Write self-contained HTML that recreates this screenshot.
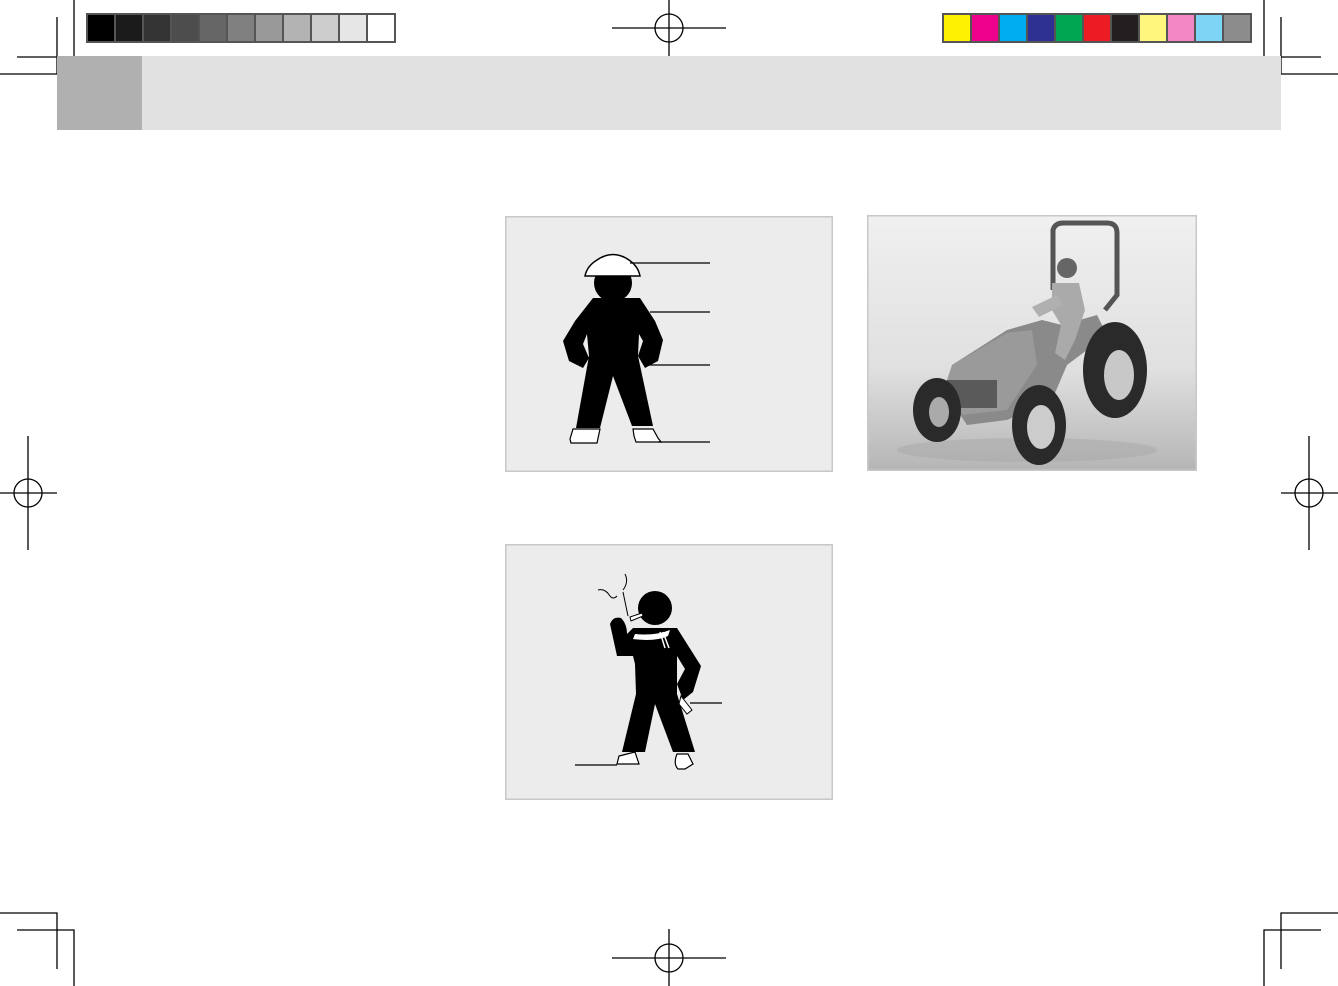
<!DOCTYPE html>
<html><head><meta charset="utf-8"><style>
body{margin:0;width:1338px;height:986px;background:#fff;position:relative;overflow:hidden;font-family:"Liberation Sans",sans-serif}
.a{position:absolute}
</style></head><body>
<svg class="a" style="left:0;top:0" width="1338" height="986">
<g stroke="#000" stroke-width="1.3" fill="none">
<path d="M74 0V57H17M57 17V74H0"/>
<path d="M1264 0V57H1321M1281 17V74H1338"/>
<path d="M0 913H57V969M17 930H74V986"/>
<path d="M1338 913H1281V969M1321 930H1264V986"/>
<path d="M612 28H726M669 0V57"/><circle cx="669" cy="28" r="14"/>
<path d="M612 958H726M669 929V986"/><circle cx="669" cy="958" r="14"/>
<path d="M0 493H57M28 436V550"/><circle cx="28" cy="493" r="14"/>
<path d="M1281 493H1338M1309 436V550"/><circle cx="1309" cy="493" r="14"/>
</g>
<rect x="86" y="13" width="310" height="30" fill="#555"/>
<g>
<rect x="88" y="15" width="26" height="26" fill="#000"/>
<rect x="116" y="15" width="26" height="26" fill="#1b1b1b"/>
<rect x="144" y="15" width="26" height="26" fill="#333"/>
<rect x="172" y="15" width="26" height="26" fill="#4d4d4d"/>
<rect x="200" y="15" width="26" height="26" fill="#666"/>
<rect x="228" y="15" width="26" height="26" fill="#808080"/>
<rect x="256" y="15" width="26" height="26" fill="#999"/>
<rect x="284" y="15" width="26" height="26" fill="#b3b3b3"/>
<rect x="312" y="15" width="26" height="26" fill="#ccc"/>
<rect x="340" y="15" width="26" height="26" fill="#e6e6e6"/>
<rect x="368" y="15" width="26" height="26" fill="#fff"/>
</g>
<rect x="942" y="13" width="310" height="30" fill="#555"/>
<g>
<rect x="944" y="15" width="26" height="26" fill="#fff200"/>
<rect x="972" y="15" width="26" height="26" fill="#ec008c"/>
<rect x="1000" y="15" width="26" height="26" fill="#00aeef"/>
<rect x="1028" y="15" width="26" height="26" fill="#2e3192"/>
<rect x="1056" y="15" width="26" height="26" fill="#00a651"/>
<rect x="1084" y="15" width="26" height="26" fill="#ed1c24"/>
<rect x="1112" y="15" width="26" height="26" fill="#231f20"/>
<rect x="1140" y="15" width="26" height="26" fill="#fff67d"/>
<rect x="1168" y="15" width="26" height="26" fill="#f387c4"/>
<rect x="1196" y="15" width="26" height="26" fill="#7dd4f5"/>
<rect x="1224" y="15" width="26" height="26" fill="#8c8c8c"/>
</g>
<rect x="57" y="56" width="1224" height="74" fill="#e1e1e1"/>
<rect x="57" y="56" width="85" height="74" fill="#b1b0b0"/>
</svg>

<svg class="a" style="left:505px;top:216px" width="328" height="256">
<rect x="0.5" y="0.5" width="327" height="255" fill="#ececec" stroke="#c8c8c8" stroke-width="2"/>
<g fill="#000">
<circle cx="108" cy="67" r="19"/>
<path d="M88 82H135L150 105L158 124L153 145L140 152L133 140L138 125L134 118L133 140L148 210H127L108 160L95 212H71L84 140L82 118L78 128L84 142L78 152L64 145L58 125L70 105Z"/>
</g>
<path d="M80 60Q82 50 92 44Q108 33 124 44Q133 50 135 60Z" fill="#fff" stroke="#000" stroke-width="1.5"/>
<path d="M68 213H90L95 213L92 227H66L65 223Z" fill="#fff" stroke="#000" stroke-width="1.2"/>
<path d="M128 213H148L153 222L156 226H131L129 220Z" fill="#fff" stroke="#000" stroke-width="1.2"/>
<g stroke="#000" stroke-width="1.2"><path d="M125 47H205M145 96H205M143 149H205M153 226H205"/></g>
</svg>

<svg class="a" style="left:867px;top:215px" width="330" height="256">
<defs><linearGradient id="g" x1="0" y1="0" x2="0" y2="1"><stop offset="0" stop-color="#f0f0f0"/><stop offset="0.6" stop-color="#e0e0e0"/><stop offset="1" stop-color="#b5b5b5"/></linearGradient></defs>
<rect x="0.5" y="0.5" width="329" height="255" fill="url(#g)" stroke="#c8c8c8" stroke-width="2"/>
<path d="M186 75V15Q188 8 196 8H240Q250 8 250 18V80L238 95" fill="none" stroke="#555" stroke-width="5"/>
<ellipse cx="160" cy="235" rx="130" ry="12" fill="#a8a8a8" opacity="0.5"/>
<path d="M80 180L85 150L140 115L175 105L195 110L230 100L240 120L200 150L185 185L140 205L100 210Z" fill="#8a8a8a"/>
<path d="M80 165L85 150L140 118L165 115L170 150L140 195L95 200Z" fill="#9a9a9a"/>
<rect x="80" y="165" width="50" height="28" fill="#5a5a5a"/>
<ellipse cx="70" cy="195" rx="24" ry="32" fill="#2a2a2a"/>
<ellipse cx="72" cy="197" rx="10" ry="15" fill="#aaa"/>
<ellipse cx="172" cy="210" rx="27" ry="40" fill="#2a2a2a"/>
<ellipse cx="174" cy="212" rx="14" ry="22" fill="#ccc"/>
<ellipse cx="248" cy="155" rx="32" ry="48" fill="#2a2a2a"/>
<ellipse cx="252" cy="160" rx="15" ry="25" fill="#c8c8c8"/>
<circle cx="200" cy="53" r="10" fill="#666"/>
<path d="M185 68H212L218 95L208 125L198 145L188 138L194 110L185 95Z" fill="#aaa"/>
<path d="M165 92L190 80L196 90L172 102Z" fill="#b0b0b0"/>
</svg>

<svg class="a" style="left:505px;top:544px" width="328" height="256">
<rect x="0.5" y="0.5" width="327" height="255" fill="#ececec" stroke="#c8c8c8" stroke-width="2"/>
<g fill="#000">
<circle cx="150" cy="64" r="17"/>
<path d="M105 80Q108 72 116 74Q122 80 122 90L128 84H172L196 122L188 148L178 156L172 140L180 125L172 112L172 150L190 208H168L150 160L140 208H117L131 150L130 120L128 112H112Z"/>
</g>
<path d="M130 90Q150 92 165 86L163 92Q150 98 128 95Z" fill="#fff"/>
<path d="M155 88L160 104M158 88L164 104" stroke="#fff" stroke-width="1.5"/>
<path d="M125 73L137 69L138 72L126 77Z" fill="#fff" stroke="#000"/>
<path d="M93 46Q100 44 105 52Q108 56 112 52M120 30Q124 38 118 46M118 48L123 72" fill="none" stroke="#000" stroke-width="1"/>
<path d="M176 152L187 166L182 170L174 160Z" fill="#fff" stroke="#000"/>
<path d="M114 212L130 208L134 220H112Z" fill="#fff" stroke="#000" stroke-width="1.2"/>
<path d="M172 210H183L188 220L180 225H173Q168 220 172 210Z" fill="#fff" stroke="#000" stroke-width="1.2"/>
<g stroke="#000" stroke-width="1.2"><path d="M185 159H217M70 221H112"/></g>
</svg>
</body></html>
